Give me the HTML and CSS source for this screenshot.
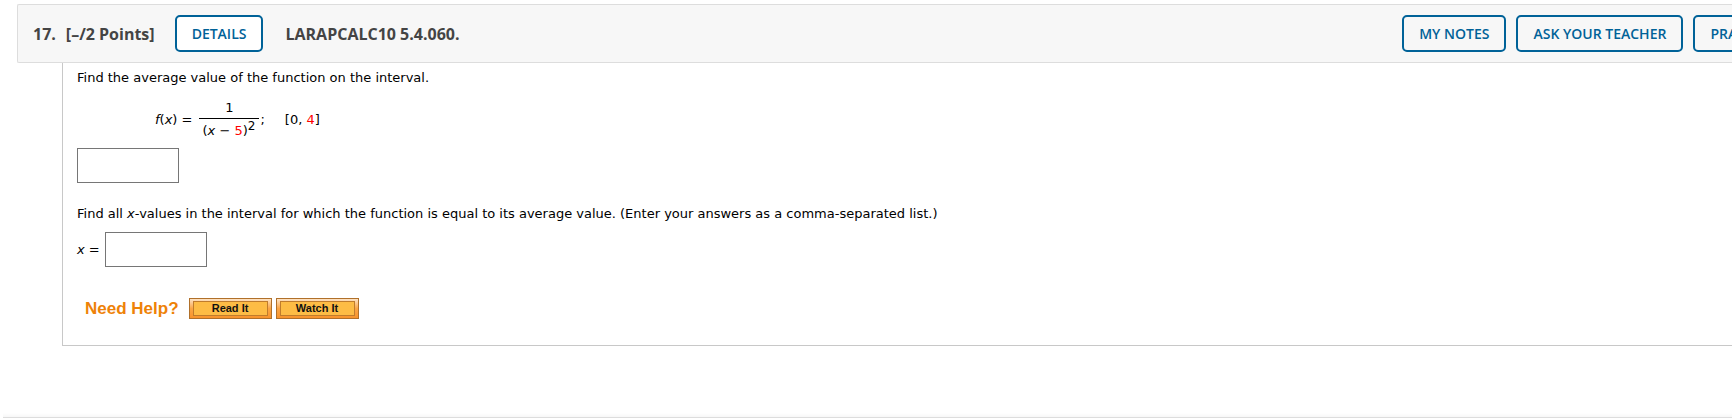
FILE: index.html
```html
<!DOCTYPE html>
<html lang="en">
<head>
<meta charset="utf-8">
<title>Question 17</title>
<link rel="stylesheet" href="styles.css">
</head>
<body>
<main class="question">
  <header class="question-header">
    <h2 class="number">17.</h2>
    <span class="points">[–/2 Points]</span>
    <button class="btn details" type="button">DETAILS</button>
    <span class="code">LARAPCALC10 5.4.060.</span>
    <div class="actions">
      <button class="btn" type="button">MY NOTES</button>
      <button class="btn" type="button">ASK YOUR TEACHER</button>
      <button class="btn" type="button">PRACTICE ANOTHER</button>
    </div>
  </header>
  <section class="question-body">
    <p class="prompt"><label for="average">Find the average value of the function on the interval.</label></p>
    <div class="equation">
      <span class="lhs"><i>f</i>(<i>x</i>) =</span>
      <span class="fraction">
        <span class="numerator">1</span>
        <span class="denominator">(<i>x</i> − <span class="value">5</span>)<sup>2</sup></span>
      </span>
      <span class="semi">;</span>
      <span class="interval">[0, <span class="value">4</span>]</span>
    </div>
    <input class="answer" id="average" type="text">
    <p class="prompt second">Find all <i>x</i>-values in the interval for which the function is equal to its average value. (Enter your answers as a comma-separated list.)</p>
    <div class="answer-row">
      <label for="xvalues"><i>x</i> =</label>
      <input class="answer" id="xvalues" type="text">
    </div>
    <div class="help">
      <strong class="help-title">Need Help?</strong>
      <button class="help-btn" type="button"><span class="help-label">Read It</span></button>
      <button class="help-btn" type="button"><span class="help-label">Watch It</span></button>
    </div>
  </section>
</main>
<hr class="divider">
</body>
</html>
```
FILE: styles.css
```css
* {
  box-sizing: border-box;
}

body {
  margin: 0;
  background: #fff;
  color: #000;
  font: 13px/16px Verdana, "DejaVu Sans", sans-serif;
  overflow-x: hidden;
}

.question {
  padding: 4px 0 0 17px;
}

.question-header {
  display: flex;
  align-items: center;
  padding: 10px 0 10px 15px;
  border: 1px solid #ddd;
  border-right: 0;
  border-radius: 2px 0 0 2px;
  background: #f7f7f7;
  color: #444;
  font: 600 16px/24px "Open Sans", sans-serif;
  overflow: hidden;
  white-space: nowrap;
}

.number {
  margin: 0 10px 0 0;
  font: inherit;
  font-weight: 700;
}

.points,
.code {
  font-weight: 700;
}

.btn {
  flex: none;
  height: 37px;
  padding: 0 15px;
  border: 2px solid #006298;
  border-radius: 5px;
  background: #f7f7f7;
  color: #006298;
  font: 600 14px/20px "Open Sans", sans-serif;
}

.details {
  margin: 0 22px 0 20px;
  background: #fff;
}

.actions {
  display: flex;
  gap: 10px;
  margin: 0 -130px 0 auto;
}

.question-body {
  margin-left: 45px;
  padding: 7px 0 26px 14px;
  border: solid #c8c8c8;
  border-width: 0 0 1px 1px;
}

.prompt {
  margin: 0;
}

.equation {
  display: flex;
  align-items: center;
  margin: 14px 0 9px 78px;
}

.fraction {
  display: flex;
  flex-direction: column;
  align-items: center;
  margin-left: 7px;
}

.numerator {
  align-self: stretch;
  padding-bottom: 2px;
  border-bottom: 1px solid #000;
  text-align: center;
}

.denominator {
  padding: 4px 4px 0 3px;
}

.denominator sup {
  font-size: 12px;
  line-height: 0;
  vertical-align: 5px;
}

.semi {
  margin-left: 1px;
}

.interval {
  margin-left: 20px;
}

.value {
  color: #f00;
}

.answer {
  display: block;
  width: 102px;
  height: 35px;
  padding: 0 6px;
  border: 1px solid #767676;
  background: #fff;
  font: inherit;
}

.second {
  margin: 23px 0 10px;
}

.answer-row {
  display: flex;
  align-items: center;
  gap: 5px;
}

.help {
  display: flex;
  align-items: center;
  gap: 4px;
  margin: 31px 0 0 8px;
}

.help-title {
  margin-right: 6px;
  color: #ee8208;
  font: bold 17px/20px "Liberation Sans", Arial, sans-serif;
}

.help-btn {
  width: 83px;
  height: 21px;
  padding: 2px 3px;
  border: 1px solid #b0702a;
  background: linear-gradient(#fde2c4, #fba545 50%, #f8932b);
  color: #111;
  font: bold 11px/13px "Liberation Sans", Arial, sans-serif;
}

.help-label {
  display: block;
  border: 1px solid #c07c2c;
  background: #fdbc45;
}

.divider {
  height: 5px;
  margin: 67px 0 0 3px;
  border: 0;
  border-bottom: 1px solid #ddd;
  background: linear-gradient(#fff, #f7f7f7);
}
```
